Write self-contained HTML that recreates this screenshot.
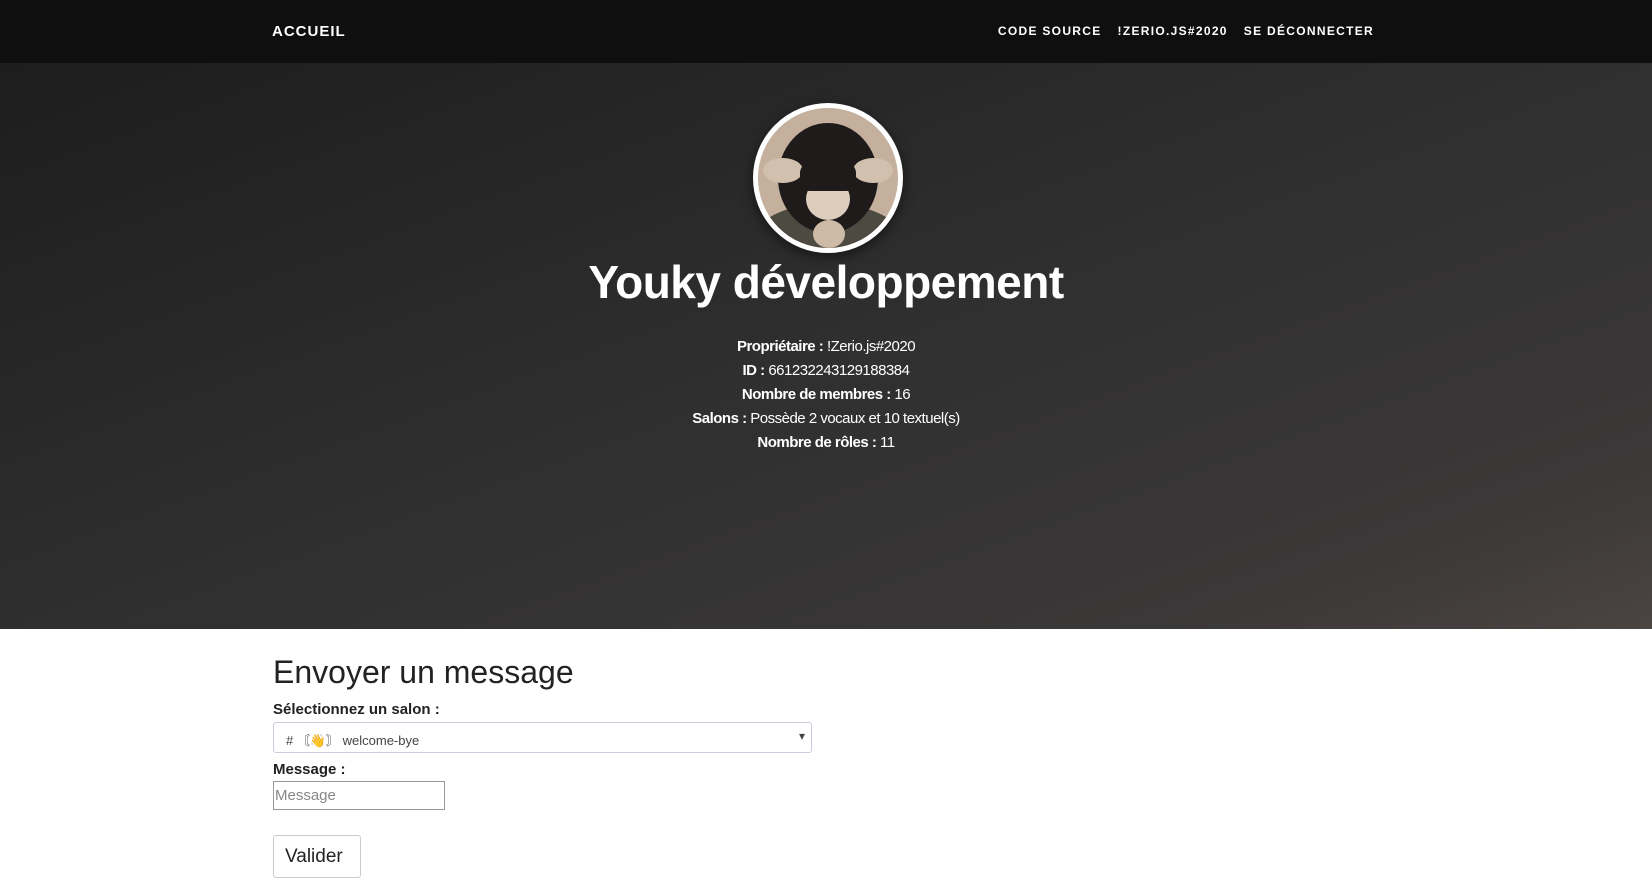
<!DOCTYPE html>
<html><head><meta charset="utf-8"><style>
*{margin:0;padding:0;box-sizing:border-box}
body{width:1652px;height:896px;overflow:hidden;font-family:"Liberation Sans",sans-serif;background:#fff;position:relative}
.nav{position:absolute;left:0;top:0;width:1652px;height:63px;background:#0f0f0f;color:#fff;font-weight:bold;letter-spacing:1px}
.nav .brand{position:absolute;left:272px;top:23px;font-size:15px}
.nav .r{position:absolute;right:278px;top:24px;font-size:12px;display:flex;gap:16px;letter-spacing:1.3px}
.hero{position:absolute;left:0;top:63px;width:1652px;height:566px;background:linear-gradient(160deg,#1e1d1d 0%,#2f2f30 50%,#3b3838 85%,#4a4442 100%);color:#fff;text-align:center}
.av{position:absolute;left:753px;top:40px;width:150px;height:150px;border-radius:50%;border:5px solid #fff;overflow:hidden;background:#c4b09c;box-shadow:0 4px 12px rgba(0,0,0,.5)}
.av i{position:absolute;display:block;border-radius:50%}
h1{position:absolute;left:0;width:100%;top:192px;font-size:46px;font-weight:bold;letter-spacing:-0.5px}
.info{position:absolute;left:0;width:100%;top:272px;font-size:15px;line-height:24px;letter-spacing:-0.5px}
.sec{position:absolute;left:273px;top:654px;color:#222}
h2{font-size:32px;font-weight:normal;margin-bottom:10px}
label{display:block;font-weight:bold;font-size:15px}
.sel{width:539px;height:31px;border:1px solid #ccd;border-radius:3px;margin-top:4px;font-size:13px;color:#444;padding:7px 12px;position:relative}
.sel:after{content:"▾";position:absolute;right:6px;top:6px;font-size:12px}
.inp{width:172px;height:29px;border:1px solid #999;margin-top:3px;color:#888;font-size:15px;padding:5px 1px}
.btn{width:88px;height:43px;border:1px solid #ccc;border-radius:3px;margin-top:25px;font-size:19px;padding:10px 11px}
</style></head><body>
<div class="nav"><div class="brand">ACCUEIL</div><div class="r"><span>CODE SOURCE</span><span>!ZERIO.JS#2020</span><span>SE DÉCONNECTER</span></div></div>
<div class="hero">
<div class="av">
<i style="left:-10px;top:95px;width:160px;height:90px;background:#4d4a42"></i>
<i style="left:20px;top:15px;width:100px;height:110px;background:#1e1b1a"></i>
<i style="left:5px;top:50px;width:40px;height:25px;background:#d2c0ae"></i>
<i style="left:95px;top:50px;width:40px;height:25px;background:#d2c0ae"></i>
<i style="left:48px;top:70px;width:44px;height:42px;background:#dccdbd"></i>
<i style="left:42px;top:55px;width:56px;height:28px;border-radius:10px;background:#1e1b1a"></i>
<i style="left:55px;top:112px;width:32px;height:28px;background:#cdbba8"></i>
</div>
<h1>Youky développement</h1>
<div class="info">
<div><b>Propriétaire :</b> !Zerio.js#2020</div>
<div><b>ID :</b> 661232243129188384</div>
<div><b>Nombre de membres :</b> 16</div>
<div><b>Salons :</b> Possède 2 vocaux et 10 textuel(s)</div>
<div><b>Nombre de rôles :</b> 11</div>
</div></div>
<div class="sec">
<h2>Envoyer un message</h2>
<label>Sélectionnez un salon :</label>
<div class="sel"># 〘👋〙 welcome-bye</div>
<label style="margin-top:8px">Message :</label>
<div class="inp">Message</div>
<div class="btn">Valider</div>
</div>
</body></html>
